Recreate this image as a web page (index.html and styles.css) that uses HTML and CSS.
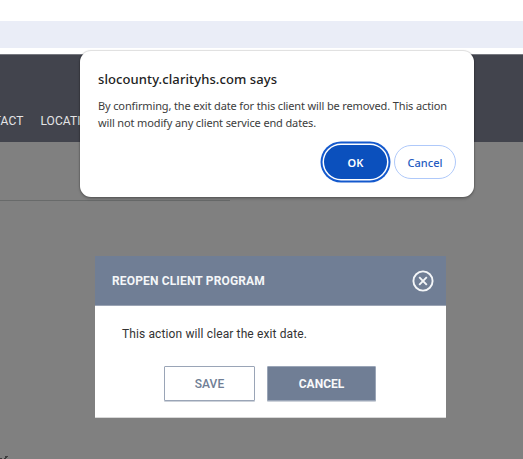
FILE: index.html
```
<!DOCTYPE html>
<html lang="en">
<head>
  <meta charset="UTF-8">
  <title>Reopen Client Program</title>
  <link rel="stylesheet" href="styles.css">
</head>
<body>
  <!-- Browser toolbar -->
  <div class="toolbar"></div>

  <!-- Site navigation -->
  <nav class="navbar">
    <a class="nav-link contact">CONTACT</a>
    <a class="nav-link">LOCATION</a>
  </nav>

  <!-- Dimmed page with the program modal -->
  <main>
    <div class="divider"></div>

    <div class="modal">
      <div class="modal-header">
        <h2 class="modal-title">REOPEN CLIENT PROGRAM</h2>
        <svg class="close-icon" viewBox="0 0 22 22">
          <circle cx="11" cy="11" r="9.6"/>
          <path d="M7.2 7.2l7.6 7.6M14.8 7.2l-7.6 7.6"/>
        </svg>
      </div>
      <div class="modal-body">
        <p class="modal-text">This action will clear the exit date.</p>
        <div class="modal-actions">
          <button class="btn btn-save">SAVE</button>
          <button class="btn btn-cancel">CANCEL</button>
        </div>
      </div>
    </div>

    <svg class="page-mark" viewBox="0 0 8 3">
      <path d="M0 2h2v1h-2zM5 0h3v1h-1v1h-1v1h-2v-1h1z"/>
    </svg>
  </main>

  <!-- Browser confirm dialog -->
  <div class="dialog">
    <h1 class="dialog-title">slocounty.clarityhs.com says</h1>
    <p class="dialog-text">
      By confirming, the exit date for this client will be removed. This action<br>
      will not modify any client service end dates.
    </p>
    <div class="dialog-actions">
      <button class="pill pill-ok">OK</button>
      <button class="pill pill-cancel">Cancel</button>
    </div>
  </div>
</body>
</html>
```
FILE: styles.css
```
:root {
  --slate: #707e95;
  --navy: #42444d;
  --blue: #0b50bd;
}

* {
  margin: 0;
  padding: 0;
  box-sizing: border-box;
}

body {
  position: relative;
  height: 459px;
  padding-top: 21px;
  display: flex;
  flex-direction: column;
  overflow: hidden;
  background-color: white;
  font-family: Roboto, "Liberation Sans", sans-serif;
}

.toolbar {
  height: 27px;
  margin-bottom: 6px;
  background-color: #eaedf7;
}

.navbar {
  height: 88px;
  padding-top: 59px;
  display: flex;
  gap: 17px;
  border-top: 1px solid #777980;
  background-color: var(--navy);
}

.nav-link {
  font-size: 12px;
  line-height: 14px;
  letter-spacing: 0.1px;
  color: #e4e4e6;
}

.contact {
  margin-left: -31px;
}

main {
  position: relative;
  flex: 1;
  padding-top: 58px;
  background-color: #808080;
}

.divider {
  width: 230px;
  height: 1px;
  background-color: #686a6a;
}

.modal {
  width: 351px;
  height: 162px;
  margin: 55px 0 0 95px;
  border-bottom: 1px solid #d8d8d8;
  background-color: white;
}

.modal-header {
  height: 50px;
  padding: 0 12px 0 17px;
  display: flex;
  align-items: center;
  justify-content: space-between;
  border-bottom: 1px solid #9ba4b4;
  background-color: var(--slate);
}

.modal-title {
  font-size: 12px;
  font-weight: 700;
  letter-spacing: 0.15px;
  color: #f4f6f8;
}

.close-icon {
  width: 22px;
  height: 22px;
  fill: none;
  stroke: #f4f6f8;
  stroke-width: 1.9;
}

.modal-body {
  padding-top: 20px;
}

.modal-text {
  padding-left: 27px;
  font-size: 12px;
  line-height: 16px;
  letter-spacing: 0.12px;
  color: #333;
}

.modal-actions {
  margin-top: 24px;
  padding-left: 69px;
  display: flex;
  gap: 12px;
}

.btn {
  height: 35px;
  padding-top: 1px;
  border: 1px solid #9aa5b7;
  border-radius: 1px;
  box-shadow: 0 1px 0 rgba(112, 126, 149, 0.35);
  font-family: inherit;
  font-size: 12px;
}

.btn-save {
  width: 91px;
  background-color: white;
  color: var(--slate);
  font-weight: 500;
  letter-spacing: 0.1px;
}

.btn-cancel {
  width: 109px;
  background-color: var(--slate);
  color: #f8f9fa;
  font-weight: 700;
}

.page-mark {
  position: absolute;
  left: 0;
  bottom: 0;
  width: 8px;
  height: 3px;
  fill: #3c3c3c;
}

.dialog {
  position: absolute;
  left: 80px;
  top: 51px;
  width: 394px;
  height: 146px;
  padding: 18px 18px 0;
  border-radius: 11px;
  background-color: white;
  box-shadow: 0 0 1px 1px rgba(0, 0, 0, 0.13), 0 2px 3px rgba(0, 0, 0, 0.2);
  font-family: "Noto Sans", "Open Sans", sans-serif;
}

.dialog-title {
  font-size: 13px;
  font-weight: 500;
  line-height: 20px;
  letter-spacing: 0.1px;
  white-space: nowrap;
  color: #222;
}

.dialog-text {
  margin-top: 8px;
  font-size: 11px;
  line-height: 17px;
  letter-spacing: -0.135px;
  white-space: nowrap;
  color: #3c3c3c;
}

.dialog-actions {
  margin-top: 14px;
  display: flex;
  justify-content: flex-end;
  gap: 7px;
}

.pill {
  height: 34px;
  border-radius: 17px;
  font-family: inherit;
  font-size: 11px;
  font-weight: 600;
}

.pill-ok {
  width: 63px;
  border: none;
  background-color: var(--blue);
  color: white;
  box-shadow: 0 0 0 1.5px white, 0 0 0 3.5px #1459cd;
}

.pill-cancel {
  width: 62px;
  border: 1px solid #afc9fa;
  background-color: white;
  color: #255bc1;
  font-weight: 500;
}
```
